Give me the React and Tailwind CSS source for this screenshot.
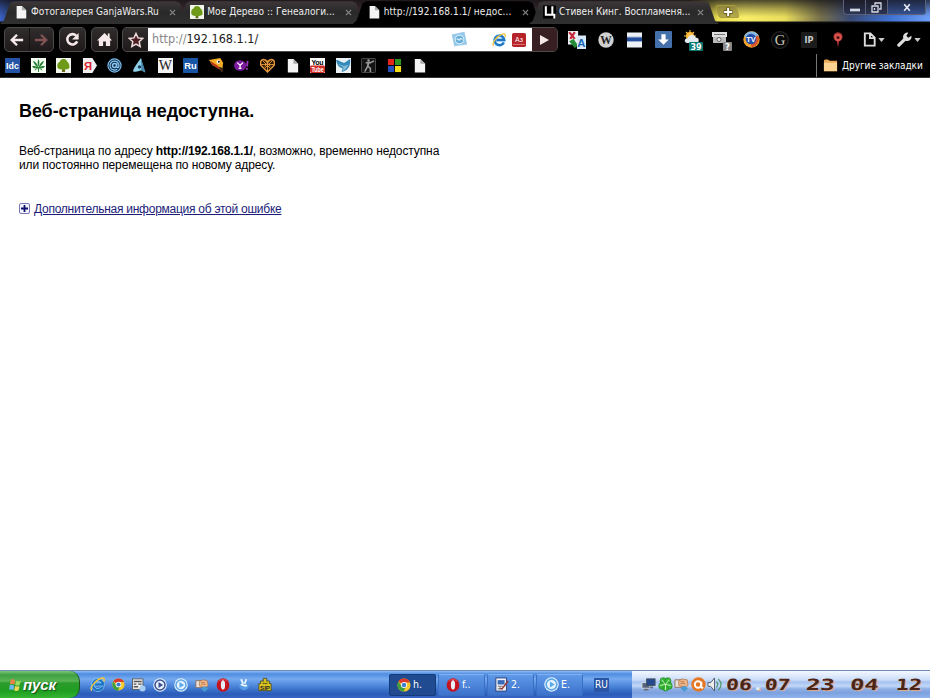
import React from 'react';

const Svg = ({ children, className = 'w-[15px] h-[15px]' }) => (
  <svg viewBox="0 0 16 16" className={`shrink-0 block ${className}`}>{children}</svg>
);

const Page = ({ className }) => (
  <Svg className={className}>
    <path d="M3 1h6l5 5v9.500H3z" fill="#f4f4f4" />
    <path d="M9 1v5h5z" fill="#aaa" />
  </Svg>
);

const Tree = ({ className }) => (
  <Svg className={className}>
    <path d="M0 0h16v16H0z" fill="#f2f6ea" />
    <path d="M7 9h2l.8 6H6.200z" fill="#6b6a23" />
    <path d="M8 1C5 1 4.500 3 4 4 1 5 1 9 2 11c2 2 10 2 12 0 1-2 0-6-2-7-.5-1-1-3-4-3z" fill="#6f9a18" />
  </Svg>
);

const Chrome = ({ className }) => (
  <Svg className={className}>
    <circle cx="8" cy="8" r="7.500" fill="#f5c92c" />
    <path d="M8 8 1.500 4.200A7.500 7.500 0 0 1 14.800 5H8z" fill="#d93a2b" />
    <path d="M1.500 4.200A7.500 7.500 0 0 0 7.500 15.500L10 10 6 10z" fill="#3f9f3c" />
    <circle cx="8" cy="8" r="3.500" fill="#fff" />
    <circle cx="8" cy="8" r="2.600" fill="#3c7ed0" />
  </Svg>
);

const Explorer = ({ className }) => (
  <Svg className={className}>
    <path d="M13.500 10.800A5.500 5.500 0 1 1 14 8H5" fill="none" stroke="#9bdcff" strokeWidth="3.600" />
    <path d="M13.500 10.800A5.500 5.500 0 1 1 14 8H5" fill="none" stroke="#1f74c4" strokeWidth="2.600" />
    <path d="M2 14.500C-1 12 6 3 12 1.300c4-1 3.500 2 2.500 3.700" fill="none" stroke="#f3c63e" strokeWidth="1.500" />
  </Svg>
);

const Opera = ({ className }) => (
  <Svg className={className}>
    <ellipse cx="8" cy="8" rx="7.300" ry="7.600" fill="#c4141f" />
    <ellipse cx="8" cy="8" rx="2.400" ry="5.300" fill="#e8edf8" />
    <path d="M3 4c2-3 8-3 10 0" fill="none" stroke="#ee6a6a" strokeWidth=".8" />
  </Svg>
);

const Player = ({ className, fill = '#5aa7e8' }) => (
  <Svg className={className}>
    <circle cx="8" cy="8" r="7.700" fill="#e8f3ff" />
    <circle cx="8" cy="8" r="5.700" fill="none" stroke={fill} strokeWidth="1.700" />
    <path d="M6.300 4.700 11.500 8l-5.200 3.300z" fill={fill} />
  </Svg>
);

const HandCard = ({ className }) => (
  <Svg className={className}>
    <path d="M1 3h7v8H1z" fill="#e8e3dc" stroke="#8b6d5c" />
    <path d="M5 4 9 2l5 1 1 6-4 2-6-2z" fill="#f0b78b" stroke="#a6683b" strokeWidth=".7" />
    <path d="M7 5h4M7 7h5" stroke="#a6683b" strokeWidth=".8" />
    <path d="m11 9 4 3-4 4-4-4z" fill="#4a9bd2" />
  </Svg>
);

const Weed = () => (
  <Svg>
    <path d="M0 0h16v16H0z" fill="#f5fff2" />
    <path d="M8 1c1.500 3 1 6 0 8-1-2-1.500-5 0-8zM2 3c3 1 5 4 6 7-3-1-5-4-6-7zM14 3c-3 1-5 4-6 7 3-1 5-4 6-7zM1 9c3-1 5 0 7 1.500-3 1-5 .5-7-1.500zM15 9c-3-1-5 0-7 1.500 3 1 5 .5 7-1.500z" fill="#217c2d" />
    <path d="m8 10-4 3m4-3 4 3m-4-3v5" stroke="#217c2d" />
  </Svg>
);

const Yandex = () => (
  <Svg>
    <path d="M1 0h10l5 8-5 8H1z" fill="#f0f0f0" />
    <text x="2" y="12.500" fontSize="12" fontWeight="700" fill="#d9232e" fontFamily="Liberation Sans, sans-serif">Я</text>
  </Svg>
);

const Letters = ({ children, bg, fill = '#fff', size = 10, y = 12, weight = 700, font = 'Liberation Sans, sans-serif' }) => (
  <Svg>
    <rect width="16" height="16" fill={bg} />
    <text x="8" y={y} textAnchor="middle" fontSize={size} fontWeight={weight} fill={fill} fontFamily={font}>{children}</text>
  </Svg>
);

const MailAgent = () => (
  <Svg>
    <circle cx="8" cy="8" r="7" fill="#112d48" stroke="#79b9e9" strokeWidth="1.300" />
    <circle cx="8" cy="8" r="2.100" fill="none" stroke="#8bc9f5" strokeWidth="1.500" />
    <path d="M10.500 5.500v4c1 2 2.500 0 2.300-1.500a4.800 4.800 0 1 0-2 4" fill="none" stroke="#8bc9f5" strokeWidth="1.300" />
  </Svg>
);

const Peak = () => (
  <Svg>
    <path d="M9.500 0C7 4 2 10 1 14c3 2 8-1 9-1l4 2.500z" fill="#8fcfe8" />
    <path d="m9.500 0 5 15.500-4.500-2.500z" fill="#4787ab" />
    <circle cx="8" cy="9.500" r="1.800" fill="#173f5f" />
  </Svg>
);

const Parrot = () => (
  <Svg>
    <path d="M0 2 12 0l3 5-1 10-4-5-6-2z" fill="#f4ad24" />
    <path d="m1 3 8 5 4 5-4-2-6-4z" fill="#ba3b18" />
    <path d="m10 9 5 2-1 4z" fill="#332018" />
    <circle cx="10" cy="4" r="2" fill="#fff" /><circle cx="10.500" cy="4" r="1" />
  </Svg>
);

const Yahoo = () => (
  <Svg>
    <ellipse cx="6.500" cy="8" rx="6.500" ry="5.500" fill="#7b1b9e" />
    <path d="m3.500 5 3 3 3-3M6.500 8v3M5 11h3" stroke="#fff" strokeWidth="1.300" fill="none" />
    <path d="m14.500 3-.5 6M13.700 10.500v2" stroke="#a036c5" strokeWidth="2" />
  </Svg>
);

const Heart = () => (
  <Svg>
    <path d="M8 15 1 8C-1 1 5 0 8 4c3-4 9-3 7 4z" fill="#2b1604" stroke="#e7993b" strokeWidth="1.500" />
    <path d="m3 3 8 8M13 3l-8 8M1 7h14M5 2l6 7M11 2 5 9M8 4v10" stroke="#e7993b" strokeWidth="1" />
  </Svg>
);

const Youtube = () => (
  <Svg className="w-[15px] h-[15px]">
    <rect width="16" height="16" fill="#fff" />
    <rect y="8" width="16" height="8" rx="1.500" fill="#d32d27" />
    <text x="8" y="7" fontSize="7.500" textLength="13" fontWeight="700" textAnchor="middle" fontFamily="Liberation Sans, sans-serif">You</text>
    <text x="8" y="14.500" fontSize="7" textLength="13" lengthAdjust="spacingAndGlyphs" fontWeight="700" fill="#fff" textAnchor="middle" fontFamily="Liberation Sans, sans-serif">Tube</text>
  </Svg>
);

const Bird = () => (
  <Svg>
    <rect width="16" height="16" fill="#e9f1f4" />
    <path d="M0 2c4 0 6 3 9 3l6-4c1 7-2 12-9 14l1-4C3 10 1 7 0 2z" fill="#3589b9" />
    <path d="M2 6c4 1 6 4 11 1-1 4-4 6-6 7l1-4z" fill="#85bdd8" />
  </Svg>
);

const Shooter = () => (
  <Svg>
    <rect x=".5" y=".5" width="15" height="15" rx="1" fill="#141414" stroke="#515151" />
    <path d="M5 5h5l4-2M8 4 7 9l-3 5.500M7.500 9 10 11v4M9 4 7 9" fill="none" stroke="#999" strokeWidth="1.600" />
    <circle cx="8" cy="2.700" r="1.300" fill="#999" />
  </Svg>
);

const Squares = () => (
  <Svg>
    <rect x="1" y="1" width="6.500" height="6.500" fill="#e1261c" /><rect x="8.500" y="1" width="6.500" height="6.500" fill="#2d941f" />
    <rect x="1" y="8.500" width="6.500" height="6.500" fill="#254fbc" /><rect x="8.500" y="8.500" width="6.500" height="6.500" fill="#f3dc1a" />
  </Svg>
);

const bookmarks = [
  <Letters bg="#2553a6" size={9.5}>Idc</Letters>,
  <Weed />,
  <Tree />,
  <Yandex />,
  <MailAgent />,
  <Peak />,
  <Letters bg="#f3f3f3" fill="#222" size={15} y={13} weight={400} font="Liberation Serif, serif">W</Letters>,
  <Letters bg="#1856a5" size={10}>Ru</Letters>,
  <Parrot />,
  <Yahoo />,
  <Heart />,
  <Page />,
  <Youtube />,
  <Bird />,
  <Shooter />,
  <Squares />,
  <Page />,
];

const Translate = () => (
  <Svg className="w-[18px] h-[18px]">
    <path d="M0 0h9v12H0z" fill="#eceef2" />
    <path d="m1 1 5 6m0-6L2 7" stroke="#c5273b" strokeWidth="2" />
    <path d="m1 9 4-2 4 6-3 2z" fill="#238b37" />
    <rect x="8" y="4" width="8" height="12" fill="#d7e9fa" />
    <text x="8.200" y="14" fontSize="10" fontWeight="700" fill="#1866b5" fontFamily="Liberation Sans, sans-serif">A</text>
  </Svg>
);

const Wiki = () => (
  <Svg className="w-[16px] h-[16px]">
    <circle cx="8" cy="8" r="7.700" fill="#d0d0d0" />
    <text x="8" y="12" textAnchor="middle" fontSize="11.500" fontWeight="700" fill="#222" fontFamily="Liberation Serif, serif">W</text>
  </Svg>
);

const Bars = () => (
  <Svg className="w-[15px] h-[16px]">
    <rect y="0" width="16" height="16" fill="#edf1f6" />
    <rect y="5" width="16" height="4.500" fill="#244d9c" />
    <path d="M0 5h16" stroke="#7894cb" />
  </Svg>
);

const Download = () => (
  <Svg className="w-[17px] h-[17px]">
    <rect width="16" height="16" rx="1" fill="#4470ac" />
    <path d="M6 3h4v5h3l-5 5-5-5h3z" fill="#fff" />
  </Svg>
);

const Weather = () => (
  <svg viewBox="0 0 22 22" className="w-[22px] h-[22px] mt-[2px] shrink-0">
    <circle cx="8" cy="6" r="4" fill="#ffb62d" />
    <path d="M8 0v12M2 6h12M4 2l8 8M12 2l-8 8" stroke="#ffc14a" strokeWidth="1.100" />
    <path d="M5 13c-4-1-2-5 1-5 1-4 7-4 8 0 3-1 4 4 1 5z" fill="#e4ebf0" />
    <rect x="7" y="12" width="14" height="9" rx="1" fill="#0b7773" />
    <text x="14" y="19.500" textAnchor="middle" fontSize="8" fontWeight="700" fill="#fff" fontFamily="DejaVu Sans, sans-serif">39</text>
  </svg>
);

const MailQuestion = () => (
  <svg viewBox="0 0 22 22" className="w-[22px] h-[22px] mt-[2px] shrink-0">
    <path d="M1 2h15v5H1z" fill="#ddd" /><path d="M2 7h13v6H2z" fill="#b9b9b9" />
    <path d="M3 4.500h11" stroke="#777" /><circle cx="8" cy="9.500" r="2" fill="#eee" stroke="#666" />
    <rect x="12" y="12" width="9" height="9" rx="1" fill="#888" />
    <text x="16.500" y="19.700" textAnchor="middle" fontSize="8.500" fontWeight="700" fill="#fff" fontFamily="DejaVu Sans, sans-serif">?</text>
  </svg>
);

const Tv = () => (
  <Svg className="w-[17px] h-[17px]">
    <circle cx="8" cy="8" r="7.700" fill="#f3a32c" />
    <path d="M1 5a7.700 7.700 0 0 1 14 0L8 8z" fill="#87bae0" />
    <path d="M14 4c3 5-2 12-6 11l-1-6z" fill="#d75529" />
    <circle cx="7.500" cy="7.500" r="5" fill="#254eac" />
    <text x="7.500" y="10.300" textAnchor="middle" fontSize="7" fontWeight="700" fill="#fff" fontFamily="Liberation Sans, sans-serif">TV</text>
  </Svg>
);

const GoogleG = () => (
  <Svg className="w-[18px] h-[18px]">
    <circle cx="8" cy="8" r="7.500" fill="#090909" stroke="#252525" />
    <text x="8" y="12.500" textAnchor="middle" fontSize="13" fill="#cac6b6" fontFamily="Liberation Serif, serif">G</text>
  </Svg>
);

const Ip = () => (
  <Svg className="w-[16px] h-[16px]">
    <rect width="16" height="16" rx="1" fill="#1c1c1c" />
    <text x="8" y="11" textAnchor="middle" fontSize="9" fontWeight="700" fill="#ccc" fontFamily="DejaVu Sans Condensed, DejaVu Sans, sans-serif">IP</text>
  </Svg>
);

const Pin = () => (
  <Svg className="w-[16px] h-[16px]">
    <path d="M8 15.500 6.800 9a4.500 4.500 0 1 1 2.400 0z" fill="#a93131" />
    <circle cx="8" cy="5.500" r="3.700" fill="#d9534f" /><circle cx="8" cy="5.500" r="1.500" fill="#461313" />
  </Svg>
);

const extensions = [<Translate />, <Wiki />, <Bars />, <Download />, <Weather />, <MailQuestion />, <Tv />, <GoogleG />, <Ip />, <Pin />];

const tabs = [
  { title: 'Фотогалерея GanjaWars.Ru', icon: <Page className="w-[14px] h-[14px]" />, tracking: 'tracking-[0px]' },
  { title: 'Мое Дерево :: Генеалоги...', icon: <Tree className="w-[14px] h-[14px]" />, tracking: 'tracking-[0.04px]' },
  { title: 'http://192.168.1.1/ недос...', icon: <Page className="w-[14px] h-[14px]" />, active: true, tracking: 'tracking-[0.12px]' },
  {
    title: 'Стивен Кинг. Воспламеня...',
    icon: <Svg className="w-[13px] h-[14px]"><rect width="16" height="16" /><path d="M3.500 1v10.500h8V1M11 11.500h3V16" fill="none" stroke="#fff" strokeWidth="2.500" /></Svg>,
    tracking: 'tracking-[0px]',
  },
];

const Tab = ({ title, icon, active, tracking }) => (
  <div
    className={`w-[190px] h-[24px] -mr-[13.700px] shrink-0 flex items-center pl-[14px] pr-[12px] [clip-path:polygon(0_100%,4px_85%,10px_12%,14px_5%,176px_5%,180px_12%,186px_85%,190px_100%)] ${
      active ? 'bg-black' : 'bg-linear-to-b from-[#40383a] via-[#292929] to-[#303030]'
    }`}
  >
    {icon}
    <span className={`ml-[3px] w-[134px] whitespace-nowrap text-[10px] leading-[14px] text-[#eee] ${tracking}`}>{title}</span>
    <svg viewBox="0 0 8 8" className="w-[7px] h-[7px] ml-[4px] shrink-0">
      <path d="m1 1 6 6M7 1 1 7" stroke="#888" strokeWidth="1.300" />
    </svg>
  </div>
);

const TabStrip = () => (
  <div className="h-[24px] flex items-start overflow-hidden bg-[linear-gradient(180deg,rgba(20,18,24,0.75)_0,rgba(20,18,24,0.3)_9px,rgba(0,0,0,0)_17px,rgba(0,0,0,0)_21px,#111_22px,#000_24px),linear-gradient(90deg,#3a62c8_0,#26365f_14px,#442d30_60px,#3a2b2d_560px,#4d4426_690px,#e8dc52_718px,#f8ee68_745px,#e8dc5c_785px,#77704a_820px,#3a4a74_850px,#3f72d2_890px,#6f9ff8_930px)]">
    <div className="flex">
      {tabs.map((tab) => <Tab key={tab.title} {...tab} />)}
    </div>
    <div className="ml-[12px] mt-[5px] w-[21px] h-[13px] flex items-center justify-center rounded-[3px] border border-[#aa9c3d] bg-[#8f8540]/60 skew-x-[15deg]">
      <svg viewBox="0 0 10 10" className="w-[10px] h-[10px] -skew-x-[15deg]">
        <path d="M5 .5v9M.5 5h9" stroke="#665c20" strokeWidth="4" /><path d="M5 1v8M1 5h8" stroke="#fff" strokeWidth="2" />
      </svg>
    </div>
    <div className="ml-auto mr-[4px] h-[15px] flex rounded-b-[4px] border border-t-0 border-[#5a6178] bg-linear-to-b from-[#1c1d28] to-[#2c3454]">
      <div className="w-[22px] flex items-center justify-center border-r border-[#5a6178]">
        <svg viewBox="0 0 10 10" className="w-[10px] h-[10px] mt-[2px]"><path d="M0 7h10" stroke="#d6dae6" strokeWidth="2.700" /></svg>
      </div>
      <div className="w-[22px] flex items-center justify-center border-r border-[#5a6178]">
        <svg viewBox="0 0 11 11" className="w-[11px] h-[11px]"><path d="M4 3V1h6v6H8M1 4h6v6H1zM3.500 6v2" fill="none" stroke="#d6dae6" strokeWidth="1.300" /></svg>
      </div>
      <div className="w-[37px] flex items-center justify-center bg-linear-to-b from-[#1f2740] to-[#34508f]">
        <svg viewBox="0 0 10 10" className="w-[8px] h-[9px]"><path d="m1.500 1 7 8M8.500 1l-7 8" stroke="#e8ebf4" strokeWidth="2" /></svg>
      </div>
    </div>
  </div>
);

const Caret = () => (
  <svg viewBox="0 0 8 5" className="w-[7px] h-[4px]"><path d="M0 0h8L4 5z" fill="#ccc" /></svg>
);

const buttonClass = 'h-[25px] flex items-center justify-center rounded-[5px] border border-[#4e4a4a] bg-linear-to-b from-[#302d2d] to-[#1f191a]';

const Toolbar = () => (
  <div className="h-[30px] pt-[3px] pl-[4px] flex items-start bg-black">
    <div className={`${buttonClass} w-[50px]`}>
      <div className="flex-1 h-full flex items-center justify-center border-r border-[#111]">
        <Svg className="w-[14px] h-[14px]"><path d="M15 8H3M8 2 2 8l6 6" fill="none" stroke="#f6e9e9" strokeWidth="2.800" /></Svg>
      </div>
      <div className="flex-1 h-full flex items-center justify-center">
        <Svg className="w-[14px] h-[14px]"><path d="M1 8h12M8 2l6 6-6 6" fill="none" stroke="#805254" strokeWidth="2.600" /></Svg>
      </div>
    </div>
    <div className={`${buttonClass} w-[27px] ml-[5px]`}>
      <Svg className="w-[15px] h-[15px]">
        <path d="M13 10a5.500 5.500 0 1 1-1-6" fill="none" stroke="#f6e9e9" strokeWidth="2.700" /><path d="M14.500 1v7h-7z" fill="#f6e9e9" />
      </Svg>
    </div>
    <div className={`${buttonClass} w-[27px] ml-[5px]`}>
      <Svg className="w-[15px] h-[15px]">
        <path d="M11.500 1.500h2V6l2.500 3h-2v6H9.500v-5h-3v5H2V9H0l8-8 3.500 3.500z" fill="#f6e9e9" />
      </Svg>
    </div>
    <div className={`${buttonClass} w-[436px] ml-[4px] overflow-hidden`}>
      <div className="w-[25px] flex justify-center shrink-0">
        <Svg className="w-[16px] h-[16px]">
          <path d="m8 1.500 2 4.400 4.800.5-3.600 3.300 1 4.800L8 12.100l-4.200 2.400 1-4.800-3.600-3.300 4.800-.5z" fill="#4a1e22" stroke="#eed9d9" strokeWidth="1.500" />
        </Svg>
      </div>
      <div className="flex-1 h-[23px] flex items-center bg-white pl-[4px] pr-[6px] text-[12.500px] text-[#222]">
        <span className="tracking-[0px] whitespace-nowrap"><span className="text-[#888]">http://</span>192.168.1.1/</span>
        <Svg className="w-[17px] h-[17px] ml-auto">
          <path d="m3 1 12 2-2 12-12-3z" fill="#98c9e9" transform="rotate(-22 8 8)" /><circle cx="8" cy="8" r="4" fill="#6aaedb" stroke="#d5ecfa" />
          <path d="M5.500 8c1-2 2 2 3 0s2 0 2 0" fill="none" stroke="#e7f7ff" />
        </Svg>
        <Explorer className="w-[14px] h-[14px] ml-[24px]" />
        <Svg className="w-[14px] h-[14px] ml-[6px]">
          <rect width="16" height="16" rx="2" fill="#b52229" />
          <path d="M1 13h14" stroke="#e28585" />
          <text x="8" y="10.500" textAnchor="middle" fontSize="8" fill="#fff" fontFamily="Liberation Sans, sans-serif">Aз</text>
        </Svg>
      </div>
      <div className="w-[25px] h-full flex items-center justify-center shrink-0 bg-[#382022]">
        <svg viewBox="0 0 9 10" className="w-[9px] h-[10px]"><path d="m0 0 9 5-9 5z" fill="#f6e9e9" /></svg>
      </div>
    </div>
    <div className="ml-[4px] h-[25px] flex items-center">
      {extensions.map((icon, i) => (
        <div key={i} className="w-[29.100px] flex justify-center">{icon}</div>
      ))}
    </div>
    <div className="ml-[9px] h-[25px] flex items-center">
      <Svg className="w-[15px] h-[15px]"><path d="M3 1.500h6l4.500 4.500v8.500H3zM8.500 2v4.500H13" fill="none" stroke="#ddd" strokeWidth="2" /></Svg>
      <div className="ml-[1px]"><Caret /></div>
      <Svg className="w-[15px] h-[15px] ml-[12px]">
        <path d="M2 14 9 7" stroke="#ddd" strokeWidth="3.500" strokeLinecap="round" />
        <path d="M12 .8A4.500 4.500 0 1 0 15.300 4L12 6 10 4z" fill="#ddd" />
      </Svg>
      <div className="ml-[2px]"><Caret /></div>
    </div>
  </div>
);

const BookmarkBar = () => (
  <div className="h-[24px] flex items-center bg-black border-b border-[#333]">
    {bookmarks.map((icon, i) => (
      <div key={i} className="w-[25.440px] shrink-0 flex justify-center">{icon}</div>
    ))}
    <div className="ml-auto h-full flex items-center border-l border-[#777] pl-[6px] pr-[7px]">
      <Svg className="w-[15px] h-[15px]">
        <path d="M1 3c0-2 5-2 6 0h8v11H1z" fill="#e9a854" /><path d="M1 5h14v9H1z" fill="#fad490" />
      </Svg>
      <span className="ml-[4px] w-[81px] text-[10px] tracking-[-0.050px] text-white whitespace-nowrap">Другие закладки</span>
    </div>
  </div>
);

const ErrorPage = () => (
  <main className="flex-1 bg-white pl-[19px] pt-[22px] font-['Liberation_Sans',Arial,sans-serif] text-black">
    <h1 className="text-[18px] leading-[22px] font-bold tracking-[-0.080px] whitespace-nowrap">Веб-страница недоступна.</h1>
    <p className="mt-[22px] text-[12px] leading-[14px] tracking-[-0.110px] whitespace-nowrap">
      Веб-страница по адресу <b className="tracking-[-0.160px]">http://192.168.1.1/</b>, возможно, временно недоступна
      <br />
      или постоянно перемещена по новому адресу.
    </p>
    <div className="mt-[30px] flex items-center">
      <svg viewBox="0 0 11 11" className="w-[11px] h-[11px] -mt-[3px]">
        <rect x=".5" y=".5" width="10" height="10" rx="1.500" fill="#f5f5ff" stroke="#7774b7" />
        <path d="M5.500 2v7M2 5.500h7" stroke="#10106f" strokeWidth="1.800" />
      </svg>
      <a href="#" className="ml-[4px] text-[12px] leading-[15px] tracking-[-0.260px] text-[#1c1c79] underline whitespace-nowrap">Дополнительная информация об этой ошибке</a>
    </div>
  </main>
);

const Sip = () => (
  <Svg className="w-[14px] h-[15px]">
    <path d="M6 1h4v3h3v3h2v8H1V7h2V4h3z" fill="#dec621" stroke="#4d4a1e" />
    <path d="M6 5h1M9 5h1M5 7h6" stroke="#4d4a1e" />
    <text x="8" y="14" textAnchor="middle" fontSize="7" fontWeight="700" fill="#222" fontFamily="Liberation Sans, sans-serif">SIP</text>
  </Svg>
);

const quickLaunch = [
  <Explorer />,
  <Chrome className="w-[13px] h-[13px]" />,
  <Svg className="w-[14px] h-[14px]">
    <rect x=".5" y="1" width="12" height="12" fill="#eee" stroke="#555" /><path d="M2 4h9M2 7h3M7 7h4M2 10h5" stroke="#555" strokeWidth="1.500" />
    <circle cx="12" cy="12" r="3.500" fill="#a8cdf2" />
  </Svg>,
  <Player className="w-[14px] h-[14px]" fill="#3c4d91" />,
  <Player className="w-[14px] h-[14px]" />,
  <HandCard className="w-[14px] h-[14px]" />,
  <Opera className="w-[14px] h-[14px]" />,
  <Svg className="w-[12px] h-[13px]">
    <circle cx="8" cy="9" r="6.500" fill="#559be3" /><path d="m4 1 3 6M11 1 9 7M4 9c2-3 4 3 8 0" stroke="#e6f5ff" strokeWidth="2.500" fill="none" />
  </Svg>,
  <Sip />,
];

const tasks = [
  { label: 'h.', icon: <Chrome className="w-[14px] h-[14px]" />, active: true },
  { label: 'f..', icon: <Opera className="w-[14px] h-[14px]" /> },
  {
    label: '2.',
    icon: (
      <Svg className="w-[14px] h-[15px]">
        <rect x="1" y=".5" width="12" height="15" fill="#f1f4fa" stroke="#253870" /><path d="M3 3h8v5H3z" fill="#3869b8" />
        <path d="m5 12 3 1 7-9" stroke="#963737" strokeWidth="1.700" fill="none" /><path d="M3 10h6M3 13h4" stroke="#666" />
      </Svg>
    ),
  },
  { label: 'E.', icon: <Player className="w-[15px] h-[15px]" /> },
];

const Taskbar = () => (
  <footer className="h-[28px] shrink-0 flex border-t border-[#7189b5] bg-[linear-gradient(180deg,#8bbcf4_0,#4f8be0_3px,#76abf0_8px,#5c95e5_12px,#3d76cd_18px,#2b5bb8_23px,#3569c5_28px)]">
    <div className="w-[80px] flex items-center pl-[9px] rounded-r-[10px] border-r border-[#1e551c] bg-[linear-gradient(180deg,#78c778_0,#3f9f42_4px,#58b454_10px,#2b9b2b_12px,#1f9e21_20px,#33b431_27px)]">
      <Svg className="w-[14px] h-[14px]">
        <path d="M2 2c2-1 4-1 5 1L6 8C4 6 3 7 1 7z" fill="#e88443" /><path d="M8 3c2 1 4 1 6 0l-2 5c-2 1-3 1-5 0z" fill="#9bda64" />
        <path d="M1 8c2-1 4 0 5 1l-1 5c-2-1-3-1-5-1z" fill="#6ab7ed" /><path d="M7 9c2 1 3 1 5 0l-1 5c-2 1-4 1-5 0z" fill="#f7d857" />
      </Svg>
      <span className="font-['Liberation_Sans',Arial,sans-serif] text-[15px] leading-[18px] font-bold italic text-white [text-shadow:1px_1px_1px_#174d17] tracking-[-0.100px]">пуск</span>
    </div>
    <div className="ml-[7px] flex items-center">
      {quickLaunch.map((icon, i) => (
        <div key={i} className="w-[20.900px] flex justify-center">{icon}</div>
      ))}
    </div>
    <div className="ml-auto flex items-center gap-[2px]">
      {tasks.map(({ label, icon, active }) => (
        <div
          key={label}
          className={`w-[47px] h-[22px] flex items-center pl-[7px] rounded-[2px] border text-[10.500px] text-white ${
            active ? 'border-[#153a7c] bg-[#204b91]' : 'border-[#3b6fc4] border-t-[#82b2f0] bg-linear-to-b from-[#5f99e8] to-[#3c72cb]'
          }`}
        >
          {icon}
          <span className="ml-[2px]">{label}</span>
        </div>
      ))}
      <span className="ml-[9px] mr-[23px] w-[15px] h-[14px] flex items-center justify-center bg-[#2b56a6] text-[10px] text-white">RU</span>
    </div>
    <div className="w-[298px] flex items-center pl-[9px] bg-[linear-gradient(180deg,#f3f8ff_0,#cbdcf8_9px,#a5c2f0_11px,#c3d8f8_15px,#8eafe5_18px,#7da1df_22px,#91b5ed_27px)]">
      <div className="flex items-center gap-[1.500px]">
        <Svg>
          <rect x="1" y="6" width="8" height="6" fill="#56657c" stroke="#d6dce6" /><rect x="6" y="2" width="9" height="7" fill="#244b90" stroke="#46505e" />
          <path d="M3 13.500h5M9 11h4" stroke="#667080" strokeWidth="2" />
        </Svg>
        <Svg>
          <g fill="#38b83a" stroke="#16791d" strokeWidth=".6">
            <circle cx="5.500" cy="4" r="3.300" /><circle cx="10.500" cy="4" r="3.300" /><circle cx="4.500" cy="9.500" r="3.700" /><circle cx="11.500" cy="9.500" r="3.700" /><circle cx="8" cy="12" r="3" />
          </g>
          <path d="m4 3 4 5 4-5M2 9l6-1 6 1M8 8v6" fill="none" stroke="#c9f5b4" />
        </Svg>
        <HandCard />
        <Svg>
          <circle cx="8" cy="8" r="7.700" fill="#e67722" /><circle cx="7.500" cy="8" r="3.500" fill="none" stroke="#fff" strokeWidth="2" />
          <path d="M11 5v6l2 1" stroke="#fff" strokeWidth="2" fill="none" />
        </Svg>
        <Svg>
          <path d="M1 6h3l4-5v14l-4-5H1z" fill="#eee" stroke="#4f5c68" /><path d="M10 5c2 2 2 4 0 6M12 2c4 4 4 8 0 12" fill="none" stroke="#4c9662" strokeWidth="1.200" />
        </Svg>
      </div>
      <div className="ml-[4px] flex font-['DejaVu_Sans_Mono',monospace] text-[15.500px] leading-[18px] font-bold text-[#4b2417] [text-shadow:1px_1px_0_#d9a98c]">
        <span className="w-[80px]"><span className="inline-block origin-left scale-x-[1.380] -skew-x-[4deg]">06<span className="text-[#dceaff]">.</span>07</span></span>
        <span className="w-[44px]"><span className="inline-block origin-left scale-x-[1.540] -skew-x-[4deg]">23</span></span>
        <span className="w-[46px]"><span className="inline-block origin-left scale-x-[1.540] -skew-x-[4deg]">04</span></span>
        <span className="w-[28px]"><span className="inline-block origin-left scale-x-[1.380] -skew-x-[4deg]">12</span></span>
      </div>
    </div>
  </footer>
);

const App = () => (
  <div className="w-[930px] h-[698px] flex flex-col overflow-hidden bg-white font-['DejaVu_Sans_Condensed','DejaVu_Sans',sans-serif]">
    <header>
      <TabStrip />
      <Toolbar />
      <BookmarkBar />
    </header>
    <ErrorPage />
    <Taskbar />
  </div>
);

export default App;
